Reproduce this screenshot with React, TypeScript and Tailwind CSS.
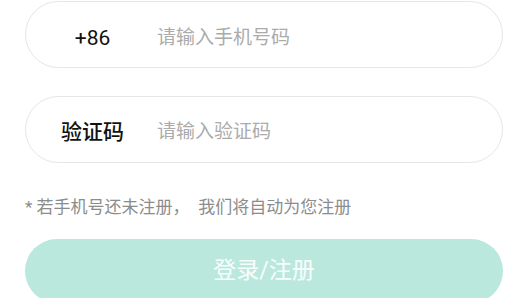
import { useState } from "react";

export default function App() {
  const [phone, setPhone] = useState("");
  const [code, setCode] = useState("");

  const font = { fontFamily: 'Roboto, "Noto Sans CJK SC", sans-serif' };

  return (
    <div className="w-[519px] h-[298px] bg-white overflow-hidden" style={font}>
      <div className="ml-[25px] w-[478px] pt-[1px] flex flex-col">
        <div className="h-[67px] pt-[9px] rounded-full border border-[#e6e6e6] flex items-center">
          <div className="ml-[26px] w-[81px] text-center text-[21px] text-[#111]">+86</div>
          <input
            value={phone}
            onChange={(e) => setPhone(e.target.value)}
            placeholder="请输入手机号码"
            className="ml-[24px] -mt-[2px] flex-1 bg-transparent outline-none text-[19px] text-[#333] placeholder:text-[#ababab]"
          />
        </div>

        <div className="mt-[28px] h-[67px] pt-[6px] rounded-full border border-[#e6e6e6] flex items-center">
          <div className="ml-[26px] w-[81px] text-center text-[21px] font-medium text-[#111]">验证码</div>
          <input
            value={code}
            onChange={(e) => setCode(e.target.value)}
            placeholder="请输入验证码"
            className="ml-[24px] flex-1 bg-transparent outline-none text-[19px] text-[#333] placeholder:text-[#ababab]"
          />
        </div>

        <p className="mt-[32px] text-[17px] leading-[24px] text-[#8c8c8c]">* 若手机号还未注册，{"\u2002"}我们将自动为您注册</p>

        <button
          disabled={!phone || !code}
          className="mt-[20px] h-[64px] rounded-full bg-[#bae8dd] text-[23px] text-white/90"
        >
          登录/注册
        </button>
      </div>
    </div>
  );
}
